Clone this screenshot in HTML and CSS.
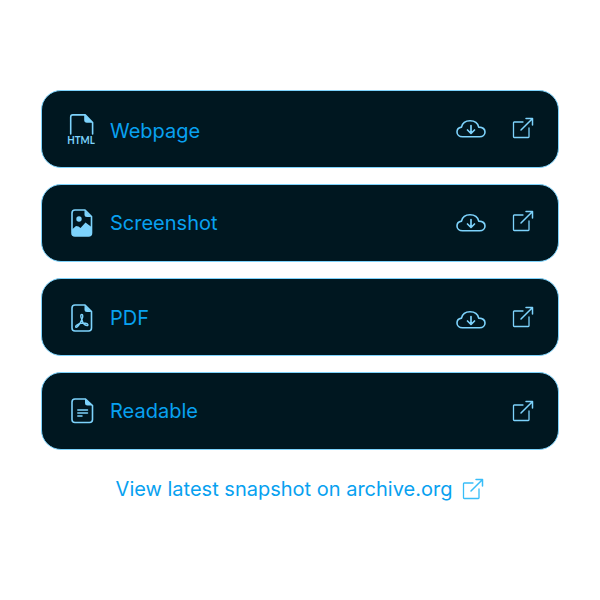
FILE: index.html
```html
<!DOCTYPE html>
<html lang="en">
<head>
<meta charset="utf-8">
<title>Preserved formats</title>
<link rel="stylesheet" href="styles.css">
</head>
<body>
<svg class="defs" width="0" height="0" aria-hidden="true">
  <symbol id="cloud" viewBox="0 0 30 20">
    <path d="M6.500 17.800C3.300 17.800 1 15.700 1 12.900C1 10.300 2.800 8.500 5.500 8.100C6.300 4.500 9.500 1.800 14 1.800C18.600 1.800 21.900 4.400 22.700 8.100C26.300 8.300 29 10.200 29 13C29 15.800 26.800 17.800 23.600 17.800Z" stroke-width="1.600"/>
    <path d="M15 6.500V14.300M11.500 11L15 14.500L18.500 11" stroke-width="1.700"/>
  </symbol>
  <symbol id="open" viewBox="0 0 22 22">
    <path d="M11 5H2.200Q1.500 5 1.500 5.700V19.800Q1.500 20.500 2.200 20.500H16.300Q17 20.500 17 19.800V11" stroke-width="1.300"/>
    <path d="M9 13L20.300 1.700M14 1.500H20.500V8" stroke-width="1.500"/>
  </symbol>
  <symbol id="page" viewBox="0 0 24 28">
    <path d="M15 1H5Q2 1 2 4V24Q2 27 5 27H18.500Q21.500 27 21.500 24V7.500Z" stroke-width="1.600"/>
    <path class="solid" d="M14.500 1V5.500Q14.500 8 17 8H21.500Z"/>
  </symbol>
</svg>
<main class="formats">
  <section class="card webpage">
    <svg class="icon html" viewBox="0 0 30 32">
      <path d="M4.700 21V4Q4.700 1.900 6.800 1.900H19.200L26.600 9.500V21" stroke-width="1.600"/>
      <path class="solid" d="M18.200 1.500V7Q18.200 9.700 20.900 9.700H27Z"/>
      <text x="1.300" y="31" textLength="27.500" lengthAdjust="spacingAndGlyphs">HTML</text>
    </svg>
    <span class="label">Webpage</span>
    <svg class="cloud"><use href="#cloud"/></svg>
    <svg class="open"><use href="#open"/></svg>
  </section>
  <section class="card shot">
    <svg class="icon" viewBox="0 0 24 28">
      <use href="#page" width="24" height="28"/>
      <circle class="solid" cx="9" cy="10" r="2.700"/>
      <path class="solid" d="M2 20.500L6 17L8.500 17.500L10.500 19L15.500 13.500L21.500 18V24Q21.500 27 18.500 27H5Q2 27 2 24Z"/>
    </svg>
    <span class="label">Screenshot</span>
    <svg class="cloud"><use href="#cloud"/></svg>
    <svg class="open"><use href="#open"/></svg>
  </section>
  <section class="card pdf">
    <svg class="icon" viewBox="0 0 24 28">
      <use href="#page" width="24" height="28"/>
      <path d="M11.800 15.500C10.300 12.500 10.500 10.500 11.800 10.500C13.100 10.500 13.100 12.800 11.800 15.500C10.700 18 8.500 22.300 6.800 23.200C5.500 23.700 5.200 22.300 6.500 21.300C8.200 20 12.500 18.800 15.500 19.200C18.200 19.500 18.600 21.800 17 21.600C14.800 21.300 12.600 18.500 11.800 15.500Z" stroke-width="1.400"/>
    </svg>
    <span class="label">PDF</span>
    <svg class="cloud"><use href="#cloud"/></svg>
    <svg class="open"><use href="#open"/></svg>
  </section>
  <section class="card readable">
    <svg class="icon" viewBox="0 0 24 28">
      <path d="M15.500 2H5Q2 2 2 5V22.500Q2 25.500 5 25.500H19.500Q22.500 25.500 22.500 22.500V8.500Z" stroke-width="1.600"/>
      <path class="solid" d="M15 1.500V6Q15 8.500 17.500 8.500H22.500Z"/>
      <path d="M7.800 12.900H17.500M7.800 16H17.500M7.800 19.100H12" stroke-width="1.500"/>
    </svg>
    <span class="label">Readable</span>
    <svg class="open"><use href="#open"/></svg>
  </section>
  <a class="archive">View latest snapshot on archive.org
    <svg class="open"><use href="#open"/></svg>
  </a>
</main>
</body>
</html>
```
FILE: styles.css
```css
* {
  box-sizing: border-box;
}

body {
  margin: 0;
  background: #fff;
  font: 400 20px/24px Inter, sans-serif;
  color: #08a1f0;
}

.defs {
  position: absolute;
}

.formats {
  display: flex;
  flex-direction: column;
  gap: 16px;
  width: 518px;
  margin: 90px auto 0;
}

.card {
  display: grid;
  grid-template-columns: 30px 1fr 30px 22px;
  align-items: center;
  height: 78px;
  padding: 0 24px;
  border: 1px solid #7dd3fc;
  border-radius: 20px;
  background: #001720;
}

svg {
  display: block;
  overflow: visible;
  fill: none;
  stroke: #7dd3fc;
  stroke-linecap: round;
  stroke-linejoin: round;
}

.solid {
  fill: #7dd3fc;
  stroke: none;
}

.icon {
  width: 24px;
  height: 28px;
  margin-left: 3.5px;
}

.pdf .icon {
  margin-top: 1px;
}

.icon.html {
  width: 30px;
  height: 32px;
  margin-left: 0;
}

.html text {
  fill: #7dd3fc;
  stroke: none;
  font: 700 11px Lato, sans-serif;
}

.label {
  padding: 2px 0 0 14px;
}

.webpage .label {
  padding-top: 4px;
}

.shot .label,
.readable .label {
  padding-top: 0;
}

.cloud {
  width: 30px;
  height: 20px;
  transform: translateX(-26px);
}

.pdf .cloud {
  margin-top: 5px;
}

.open {
  grid-column: 4;
  width: 22px;
  height: 22px;
  margin-top: -2px;
}

.shot .open {
  margin-top: -4px;
}

.pdf .open,
.readable .open {
  margin-top: 0;
}

.archive {
  display: flex;
  justify-content: center;
  align-items: center;
  gap: 10px;
  margin-top: 11px;
}

.archive .open {
  margin-top: 0;
  stroke: #38bdf8;
}
```
